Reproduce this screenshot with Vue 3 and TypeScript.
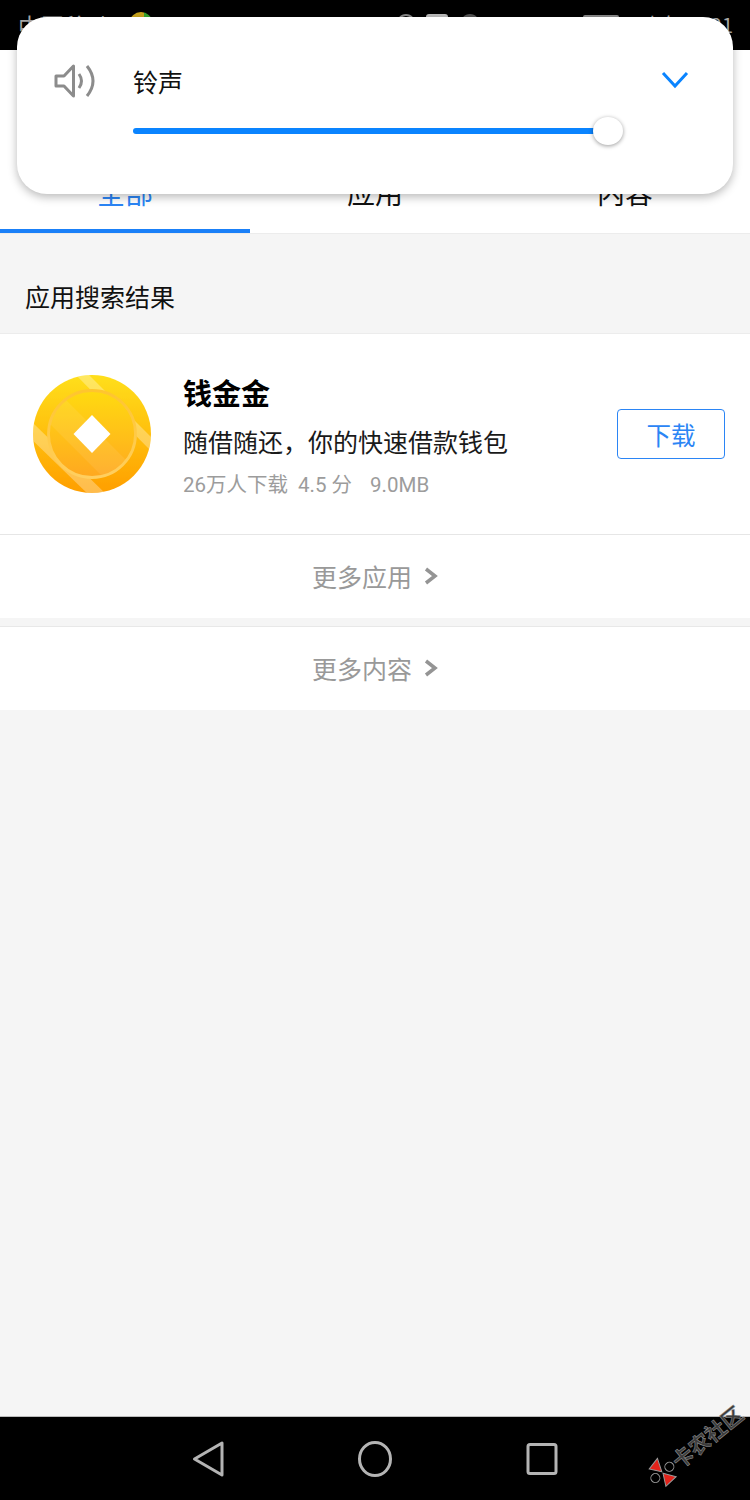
<template>
  <div class="screen">
    <!-- 状态栏，大部分被音量面板盖住 -->
    <div class="status">
      <span class="carrier">中国移动</span>
      <span class="badge"></span>
      <span class="status-right">
        <i class="hotspot"></i><i class="pill"></i><i class="dot"></i>
        <span class="net">46</span>
        <i class="battery"></i>
        <span class="clock">上午11:21</span>
      </span>
    </div>

    <div class="tabs">
      <div v-for="(tab, i) in tabs" :key="tab" class="tab" :class="{ active: i === 0 }">{{ tab }}</div>
    </div>

    <main class="content">
      <h2 class="section-title">应用搜索结果</h2>

      <section class="app-card">
        <svg class="coin" viewBox="0 0 118 118" width="118" height="118">
          <defs>
            <linearGradient id="coinFill" x1="0" y1="0" x2="0" y2="1">
              <stop offset="0" stop-color="#ffdf1c" />
              <stop offset="1" stop-color="#ff9f00" />
            </linearGradient>
            <linearGradient id="coinInner" x1="0" y1="0" x2="0" y2="1">
              <stop offset="0" stop-color="#ffda10" />
              <stop offset="1" stop-color="#ffa820" />
            </linearGradient>
            <linearGradient id="coinRing" x1="0" y1="0" x2="0" y2="1">
              <stop offset="0" stop-color="#ffc52e" />
              <stop offset="1" stop-color="#ffcf60" />
            </linearGradient>
            <clipPath id="coinClip"><circle cx="59" cy="59" r="59" /></clipPath>
            <clipPath id="innerClip"><circle cx="59" cy="59" r="43" /></clipPath>
          </defs>
          <circle cx="59" cy="59" r="59" fill="url(#coinFill)" />
          <g clip-path="url(#coinClip)" fill="#fff" opacity="0.3">
            <path d="M39 -4 L52 -4 L122 66 L122 80 Z" />
            <path d="M-4 44 L-4 62 L58 122 L76 122 Z" />
          </g>
          <circle cx="59" cy="59" r="43" fill="url(#coinInner)" />
          <path clip-path="url(#innerClip)" d="M30 22 L98 90 L78 110 L10 42 Z" fill="#fff" opacity="0.08" />
          <circle cx="59" cy="59" r="43.500" fill="none" stroke="url(#coinRing)" stroke-width="2.800" />
          <path d="M59 40 L77.500 59 L59 78 L40.500 59 Z" fill="#fff" />
        </svg>
        <div class="app-info">
          <div class="app-name">钱金金</div>
          <div class="app-desc">随借随还，你的快速借款钱包</div>
          <div class="app-meta">
            <span>26万人下载</span><span>4.5 分</span><span>9.0MB</span>
          </div>
        </div>
        <button class="download">下载</button>
      </section>

      <a class="more">
        更多应用
        <svg viewBox="0 0 14 18" width="14" height="18"><path d="M2 2 L11 9 L2 16" /></svg>
      </a>
      <a class="more second">
        更多内容
        <svg viewBox="0 0 14 18" width="14" height="18"><path d="M2 2 L11 9 L2 16" /></svg>
      </a>
    </main>

    <nav class="navbar">
      <svg viewBox="0 0 34 38" width="34" height="38">
        <path d="M32 3 V35 L4.500 19 Z" />
      </svg>
      <svg viewBox="0 0 36 38" width="36" height="38">
        <ellipse cx="18" cy="19" rx="15.500" ry="16.500" />
      </svg>
      <svg viewBox="0 0 34 38" width="34" height="38">
        <rect x="3" y="4.500" width="28" height="29" rx="2" />
      </svg>
    </nav>

    <!-- 水印 -->
    <div class="watermark">
      <svg viewBox="0 0 30 30" width="30" height="30">
        <circle class="lobe" cx="6" cy="15" r="4.500" />
        <circle class="lobe" cx="24" cy="15" r="4.500" />
        <path d="M15 14 L7 4 L20 1 Z M15 16 L9 28 L23 27 Z" />
      </svg>
      <span>卡农社区</span>
    </div>

    <!-- 音量面板 -->
    <div class="volume">
      <svg class="speaker" viewBox="0 0 44 36" width="44" height="36">
        <path d="M2 13 H10 L19.500 3 V33 L10 23 H2 Z" />
        <path d="M25 11 Q30 18 25 25" />
        <path d="M33 3 Q45 18 33 33" />
      </svg>
      <div class="volume-body">
        <div class="volume-label">铃声</div>
        <div class="slider">
          <div class="slider-track"></div>
          <div class="slider-thumb"></div>
        </div>
      </div>
      <svg class="chevron" viewBox="0 0 28 18" width="28" height="18">
        <path d="M2 2 L14 15 L26 2" />
      </svg>
    </div>
  </div>
</template>

<script setup lang="ts">
const tabs: string[] = ['全部', '应用', '内容']
</script>

<style>
body { margin: 0; background: #f5f5f5; }
</style>

<style scoped>
.screen {
  position: relative;
  width: 750px;
  height: 1500px;
  display: flex;
  flex-direction: column;
  overflow: hidden;
  background: #f5f5f5;
  font-family: "Noto Sans CJK SC", "Liberation Sans", sans-serif;
}

.status {
  height: 50px;
  flex: none;
  display: flex;
  align-items: center;
  padding: 0 18px;
  box-sizing: border-box;
  background: #000;
  color: #a8a8a8;
  font-size: 23px;
  line-height: 50px;
}
.badge {
  width: 22px;
  height: 20px;
  margin: -6px 0 0 20px;
  border-radius: 50%;
  background: linear-gradient(90deg, #c9a41c 62%, #35a52e 62%);
}
.status-right {
  margin-left: auto;
  display: flex;
  align-items: center;
}
.hotspot {
  width: 20px;
  height: 22px;
  margin-right: 10px;
  box-sizing: border-box;
  border: 2px solid #8a8a8a;
  border-radius: 50%;
}
.pill { width: 22px; height: 22px; background: #bdbdbd; border-radius: 3px; }
.dot { width: 20px; height: 22px; background: #555; border-radius: 50%; margin: 0 12px; }
.net { font-size: 22px; width: 36px; }
.battery { width: 36px; height: 20px; margin: 0 24px 0 55px; background: #8a8a8a; border-radius: 2px; }
.clock { font-size: 20px; margin-right: -1px; }

.tabs {
  height: 184px;
  flex: none;
  display: flex;
  background: #fff;
  border-bottom: 1px solid #ececec;
  box-sizing: border-box;
}
.tab {
  width: 250px;
  box-sizing: border-box;
  padding-top: 122px;
  text-align: center;
  font-size: 28px;
  line-height: 40px;
  color: #111;
}
.tab.active {
  height: 183px;
  color: #2b85f5;
  border-bottom: 4px solid #1a80f8;
}

.content { flex: 1; display: flex; flex-direction: column; }

.section-title {
  margin: 0;
  height: 99px;
  padding: 0 25px;
  font-size: 25px;
  font-weight: 400;
  line-height: 125px;
  color: #111;
  overflow: hidden;
  box-sizing: border-box;
}

.app-card {
  height: 202px;
  flex: none;
  display: flex;
  align-items: center;
  padding: 0 25px 0 33px;
  box-sizing: border-box;
  background: #fff;
  border-top: 1px solid #ececec;
  border-bottom: 1px solid #e6e6e6;
}
.coin { flex: none; margin-right: 32px; }
.app-info { flex: 1; min-width: 0; margin-top: 4px; }
.app-name { font-size: 29px; font-weight: 700; line-height: 40px; color: #000; }
.app-desc { margin-top: 11px; font-size: 25px; line-height: 36px; color: #1a1a1a; }
.app-meta {
  margin-top: 11px;
  display: flex;
  gap: 10px;
  font-size: 20.500px;
  line-height: 30px;
  color: #9c9c9c;
  font-family: Roboto, "Noto Sans CJK SC", sans-serif;
}
.app-meta span:last-child { margin-left: 8px; }

.download {
  width: 108px;
  height: 50px;
  flex: none;
  padding: 0;
  background: #fff;
  border: 1px solid #2b85f5;
  border-radius: 4px;
  color: #2b85f5;
  font-family: inherit;
  font-size: 24.500px;
}

.more {
  height: 83px;
  flex: none;
  display: flex;
  align-items: center;
  justify-content: center;
  gap: 12px;
  padding-bottom: 2px;
  box-sizing: border-box;
  background: #fff;
  color: #999;
  font-size: 25px;
}
.more.second {
  height: 84px;
  margin-top: 8px;
  border-top: 1px solid #e8e8e8;
}
.more svg { fill: none; stroke: #949494; stroke-width: 3.500; }

.navbar {
  height: 84px;
  flex: none;
  display: flex;
  align-items: center;
  box-sizing: border-box;
  padding: 0 191px 0 190px;
  justify-content: space-between;
  background: #000;
  border-top: 1px solid #bbb;
}
.navbar svg { fill: none; stroke: #b4b4b4; stroke-width: 3; stroke-linejoin: round; }

.watermark {
  position: absolute;
  left: 638px;
  top: 1431px;
  display: flex;
  align-items: center;
  transform: rotate(-39deg);
  color: #3c3c3c;
  font-size: 21px;
  font-weight: 700;
  line-height: 28px;
  -webkit-text-stroke: 0.500px #9a9a9a;
  white-space: nowrap;
}
.watermark svg { fill: #e2231a; stroke: #999; stroke-width: 1; }
.watermark .lobe { fill: #000; }

.volume {
  position: absolute;
  left: 17px;
  top: 17px;
  width: 716px;
  height: 177px;
  box-sizing: border-box;
  display: flex;
  align-items: flex-start;
  padding: 46px 44px 0 37px;
  background: #fff;
  border-radius: 30px;
  box-shadow: 0 3px 10px rgba(0, 0, 0, 0.28);
}
.speaker { flex: none; fill: none; stroke: #8c8c8c; stroke-width: 3; stroke-linejoin: round; }
.volume-body { flex: 1; margin-left: 35px; }
.volume-label { font-size: 25px; line-height: 36px; color: #111; }
.slider { position: relative; margin-top: 17px; width: 491px; height: 30px; }
.slider-track {
  position: absolute;
  left: 0;
  right: 15px;
  top: 12px;
  height: 6px;
  border-radius: 3px;
  background: #0a84ff;
}
.slider-thumb {
  position: absolute;
  right: 1px;
  top: 1px;
  width: 30px;
  height: 28px;
  border-radius: 50%;
  background: #fff;
  box-shadow: 0 1px 4px rgba(0, 0, 0, 0.4);
}
.chevron { flex: none; margin-top: 8px; fill: none; stroke: #0a84ff; stroke-width: 3; }
</style>
